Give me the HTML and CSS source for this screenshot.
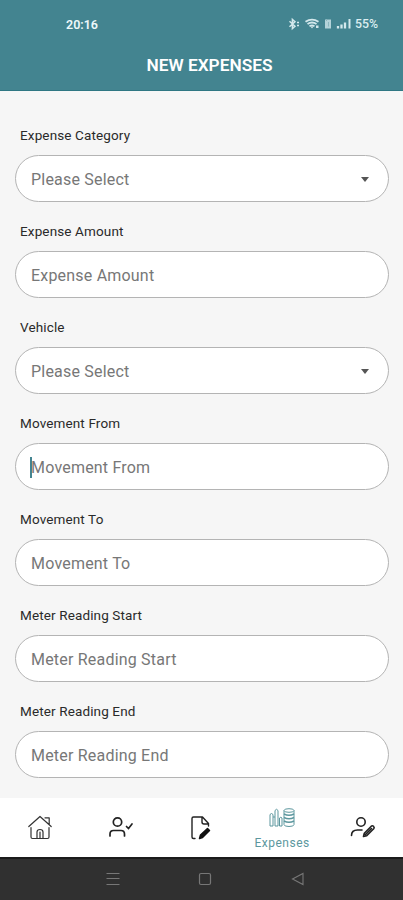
FILE: index.html
```
<!DOCTYPE html>
<html lang="en">
<head>
<meta charset="utf-8">
<title>New Expenses</title>
<link rel="stylesheet" href="styles.css">
</head>
<body>
<div class="screen">
  <header class="header">
    <div class="status">
      <span class="time">20:16</span>
      <div class="status-right">
        <svg class="status-icons" width="64" height="14" viewBox="0 0 64 14" fill="none" stroke="#d3e8ec" stroke-width="1.5">
          <path d="M1.5 4.2 7 9.2 4.4 11.6V2.4L7 4.8 1.5 9.8M9 5.4h2M9 8.6h2"/>
          <path d="M17.500 4.800Q24 .4 30.500 4.800M19.500 7Q24 4 28.500 7M21.500 9.200Q24 7.600 26.500 9.200" stroke-width="1.800"/>
          <path d="M22.500 9.500h3L24 11.500zM28 8.500h2.500v2.500H28z" fill="#d3e8ec" stroke="none"/>
          <path d="M37 2.500h6v9h-6z" fill="#b3d3d9" stroke="none"/>
          <path d="M38.500 2v2M40.500 5v4.500" stroke="#8ab6be" stroke-width="1"/>
          <path d="M50 9v2.500M53.500 7.500v4M57 5.500v6" stroke-width="2.300"/>
          <path d="M61.500 2v9.500" stroke-width="2"/>
        </svg>
        <span class="battery">55%</span>
      </div>
    </div>
    <h1 class="title">NEW EXPENSES</h1>
  </header>
  <main class="form">
    <div class="group"><div class="label">Expense Category</div><div class="field"><span>Please Select</span><i class="caret"></i></div></div>
    <div class="group"><div class="label">Expense Amount</div><div class="field"><span>Expense Amount</span></div></div>
    <div class="group"><div class="label">Vehicle</div><div class="field"><span>Please Select</span><i class="caret"></i></div></div>
    <div class="group"><div class="label">Movement From</div><div class="field focused"><span>Movement From</span></div></div>
    <div class="group"><div class="label">Movement To</div><div class="field"><span>Movement To</span></div></div>
    <div class="group"><div class="label">Meter Reading Start</div><div class="field"><span>Meter Reading Start</span></div></div>
    <div class="group"><div class="label">Meter Reading End</div><div class="field"><span>Meter Reading End</span></div></div>
  </main>
  <nav class="tabs">
    <div class="tab">
      <svg width="26" height="26" viewBox="0 0 26 26" fill="none" stroke="#333" stroke-width="1.2" stroke-linejoin="round" stroke-linecap="round">
        <path d="M1.800 11.500 13 1.500 24.200 11.500M18 2.800h4.200v6.500M4 12.500V22q0 1.500 1.500 1.500h15Q22 23.500 22 22V12.500"/>
        <path d="M10 23.500V17q0-2.500 3-2.500t3 2.500v6.500M13 17v6"/>
      </svg>
    </div>
    <div class="tab">
      <svg width="26" height="26" viewBox="0 0 26 26" fill="none" stroke="#222" stroke-width="1.700" stroke-linecap="round">
        <circle cx="9.500" cy="7" r="4.200"/><path d="M2 21v-2q0-3.500 3.500-3.500h7.500q3.500 0 3.500 3.500v2M18.500 11.500l2 2 3.500-4.500"/>
      </svg>
    </div>
    <div class="tab">
      <svg width="26" height="26" viewBox="0 0 26 26" fill="none" stroke="#222" stroke-width="1.400" stroke-linecap="round" stroke-linejoin="round">
        <path d="M7 23.500H5.500Q4 23.500 4 22V3.500Q4 2 5.500 2h9l6 6.500V11M14 2v5q0 2 2 2h4.500"/>
        <path d="M11.500 23.500l1-3.500 7-6.500 2 2-7 7z" fill="#111" stroke="#111" stroke-width="1.500"/>
      </svg>
    </div>
    <div class="tab active">
      <svg width="26" height="22" viewBox="0 0 26 22" fill="none" stroke="#5c979e" stroke-width="1">
        <path d="M1 7.500q1.500-2 3 0V19H1zM6 3.500q1.500-2.500 3 0V19H6zM10.500 11q1.300-1.500 2.500 0v8h-2.500zM4 10h2"/>
        <path d="M15 3.500v14q0 2 5 2t5-2v-14"/><ellipse cx="20" cy="3.500" rx="5" ry="1.800"/>
        <path d="M15 7q5 2.500 10 0M15 10.500q5 2.500 10 0M15 14q5 2.500 10 0" stroke-width="1.400"/>
      </svg>
      <span>Expenses</span>
    </div>
    <div class="tab">
      <svg width="26" height="26" viewBox="0 0 26 26" fill="none" stroke="#222" stroke-width="1.600" stroke-linecap="round" stroke-linejoin="round">
        <circle cx="11" cy="7" r="4.200"/><path d="M1.500 20.500q0-5.500 6-5.500h4.500"/>
        <path d="M13.500 21.500l.8-3.300 7-7q1-.9 2.300.2 1.100 1.300.1 2.400l-7 7zM15.500 19.500l6-6"/>
      </svg>
    </div>
  </nav>
  <footer class="system">
    <svg width="14" height="14" viewBox="0 0 14 14" fill="none" stroke="#777" stroke-width="1"><path d="M.5 1.500h13M.5 6.500h13M.5 12.500h13"/></svg>
    <svg width="14" height="14" viewBox="0 0 14 14" fill="none" stroke="#777" stroke-width="1.200"><rect x="1.500" y="1.500" width="11" height="11" rx="1.500"/></svg>
    <svg width="14" height="14" viewBox="0 0 14 14" fill="none" stroke="#777" stroke-width="1.100"><path d="M1.500 7 12 1.500v11z"/></svg>
  </footer>
</div>
</body>
</html>
```
FILE: styles.css
```
* { box-sizing: border-box; }
body { margin: 0; font-family: Roboto, sans-serif; }
.screen { width: 403px; height: 900px; display: flex; flex-direction: column; background: #f6f6f6; overflow: hidden; }
.header { display: flow-root; height: 91px; background: #438490; border-bottom: 1px solid #2f7783; color: #fff; flex: none; }
.status { display: flex; justify-content: space-between; align-items: center; height: 24px; margin-top: 12px; padding: 0 22px 0 66px; }
.time { font-size: 12.5px; font-weight: 600; color: #eef8fa; }
.status-right { display: flex; align-items: center; gap: 3px; }
.battery { font-size: 12.300px; font-weight: 500; color: #dceef1; width: 26px; white-space: nowrap; }
.title { margin: 18px 0 0; padding-left: 16px; font-size: 17.300px; line-height: 22px; font-weight: 600; text-align: center; }
.form { height: 707px; flex: none; padding: 34.450px 14px 0 15px; }
.group { height: 95.95px; }
.label { height: 29.500px; padding-left: 5px; font-size: 13.500px; line-height: 20px; color: #2a2a2a; letter-spacing: .13px; }
.field { height: 47px; border: 1px solid #b4b4b4; border-radius: 24px; background: #fff; display: flex; align-items: center; justify-content: space-between; padding: 2px 19px 0 15px; font-size: 16px; letter-spacing: .2px; color: #777; }
.focused { justify-content: flex-start; padding-left: 14px; }
.focused::before { content: ""; width: 1.500px; height: 21px; margin-right: -.5px; background: #438490; }
.caret { border: 4.500px solid transparent; border-top: 5px solid #555; border-bottom: 0; }
.tabs { height: 59px; flex: none; display: grid; grid-template-columns: repeat(5, 1fr); background: #fff; }
.tab { display: flex; flex-direction: column; align-items: center; justify-content: center; }
.active { font-size: 12px; line-height: 16px; letter-spacing: .5px; color: #5c979e; gap: 6px; padding-top: 3px; }
.system { flex: 1; display: flex; justify-content: center; align-items: center; gap: 78.500px; background: #303030; border-top: 2px solid #1b1b1b; padding: 0 0 2px 7px; }
```
